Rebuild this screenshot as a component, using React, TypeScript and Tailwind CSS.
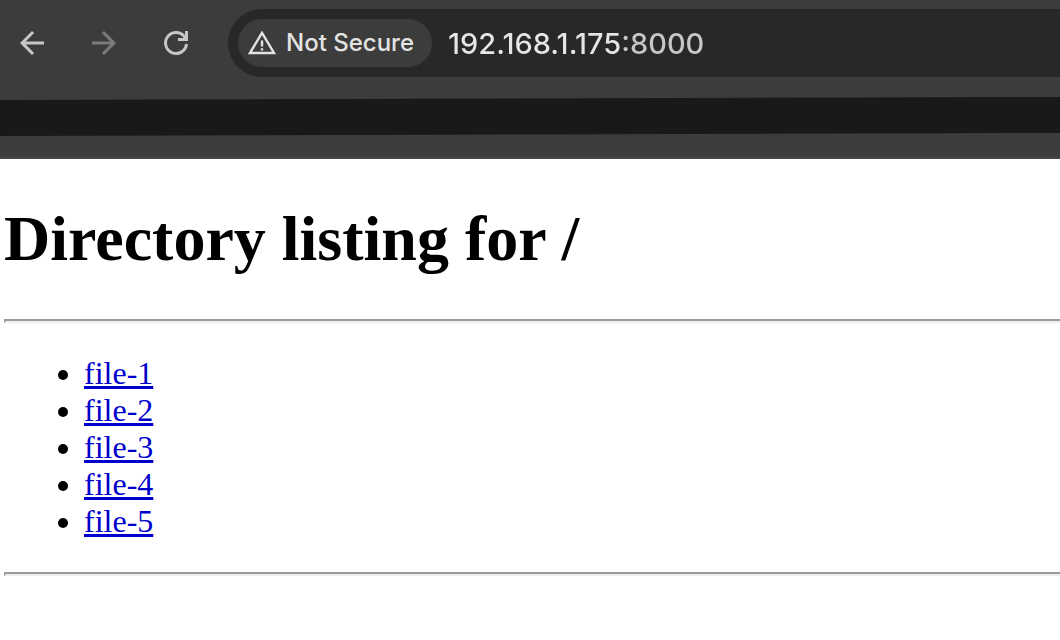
import React from "react";

const files = ["file-1", "file-2", "file-3", "file-4", "file-5"];

function BackIcon() {
  return (
    <svg viewBox="0 0 24 24" className="size-9" fill="currentColor" aria-hidden="true">
      <path d="M20 11H7.83l5.59-5.59L12 4l-8 8 8 8 1.41-1.41L7.83 13H20z" />
    </svg>
  );
}

function ForwardIcon() {
  return (
    <svg viewBox="0 0 24 24" className="size-9" fill="currentColor" aria-hidden="true">
      <path d="M4 11h12.17l-5.59-5.59L12 4l8 8-8 8-1.41-1.41L16.17 13H4z" />
    </svg>
  );
}

function ReloadIcon() {
  return (
    <svg viewBox="0 0 36 36" className="size-9" fill="none" stroke="currentColor" strokeWidth="3" aria-hidden="true">
      <path d="M28.5 19A10.5 10.5 0 1 1 26 11.1L28.5 14" />
      <path d="M28.5 6v8.5H20" />
    </svg>
  );
}

function WarningIcon() {
  return (
    <svg viewBox="0 0 28 24" className="h-6 w-7" aria-hidden="true">
      <path d="M14 1.8 26 22H2z" fill="none" stroke="currentColor" strokeWidth="2.4" />
      <path d="M12.8 9.5h2.4v6h-2.4zM12.8 17.2h2.4v2.2h-2.4z" fill="currentColor" />
    </svg>
  );
}

function Toolbar() {
  return (
    <header className="border-b-2 border-[#484648] bg-[#3c3c3c] pt-[9px] pb-[21px] font-['Inter','Liberation_Sans',sans-serif]">
      <div className="flex items-center pl-3.5">
        <nav aria-label="History" className="flex shrink-0 gap-9 text-[#c7c7c7]">
          <button type="button" aria-label="Back"><BackIcon /></button>
          <button type="button" aria-label="Forward" disabled className="text-[#7b7b7b]"><ForwardIcon /></button>
          <button type="button" aria-label="Reload"><ReloadIcon /></button>
        </nav>
        <div className="ml-[34px] flex h-[68px] min-w-0 flex-1 items-center gap-4 rounded-l-full bg-[#282828] pl-2.5">
          <button
            type="button"
            className="flex h-12 shrink-0 items-center gap-2.5 rounded-full bg-[#3c3c3c] pr-[18px] pl-2.5 text-2xl font-medium text-[#e3e3e3]"
          >
            <WarningIcon />
            Not Secure
          </button>
          <input
            type="text"
            aria-label="Address"
            defaultValue="192.168.1.175:8000"
            className="h-12 min-w-0 flex-1 bg-linear-to-r from-[#e6e6e6] from-[173px] to-[#c7c7c7] to-[173px] bg-clip-text text-[29px] font-medium text-transparent caret-white outline-none"
          />
        </div>
      </div>
      <div className="mt-5 h-[39px] bg-[#191919] [clip-path:polygon(0_3px,100%_0,100%_36px,0_100%)]" />
    </header>
  );
}

function Rule() {
  return <hr className="h-1 border-2 border-r-0 border-t-[#9a9a9a] border-b-[#eeeeee] border-l-[#9a9a9a]" />;
}

export default function App() {
  return (
    <div className="min-h-screen bg-white">
      <Toolbar />
      <main className="pl-1 font-['Liberation_Serif','Times_New_Roman',serif] text-[32px] leading-[37px] text-black">
        <h1 className="my-[43px] text-[64px] leading-[74px] font-bold">Directory listing for /</h1>
        <Rule />
        <ul className="my-8 list-disc pl-20">
          {files.map((name) => (
            <li key={name}>
              <a href={name} className="text-[#0000cc] underline">{name}</a>
            </li>
          ))}
        </ul>
        <Rule />
      </main>
    </div>
  );
}
